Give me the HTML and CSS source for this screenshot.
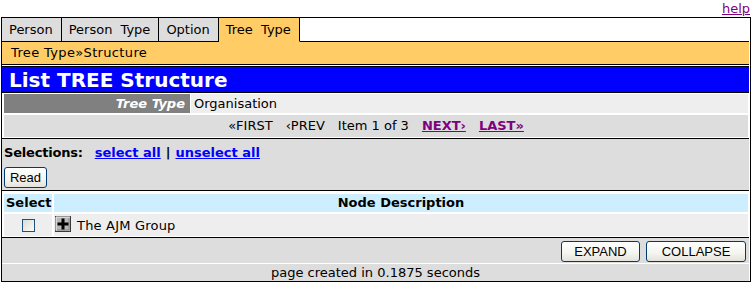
FILE: index.html
```html
<!DOCTYPE html>
<html>
	<head>
		<meta charset="UTF-8">
		<title>List TREE Structure</title>
		<link rel="stylesheet" href="styles.css">
	</head>
	<body>
		<div class="helpBar"><a href="#" class="visited">help</a></div>
		<div class="frame">
			<div class="tabs">
				<div class="tab">Person</div>
				<div class="tab">Person Type</div>
				<div class="tab">Option</div>
				<div class="tab active">Tree Type</div>
				<div class="tabFill"></div>
			</div>
			<div class="crumb">Tree Type»Structure</div>
			<div class="title">List TREE Structure</div>
			<div class="info">
				<div class="infoRow">
					<div class="label">Tree Type</div>
					<div class="value">Organisation</div>
				</div>
				<div class="pager">
					<span>«FIRST</span>
					<span>‹PREV</span>
					<span>Item 1 of 3</span>
					<a href="#" class="visited">NEXT›</a>
					<a href="#" class="visited">LAST»</a>
				</div>
			</div>
			<div class="selections">
				<div class="selLine">
					<b>Selections:</b>
					<a href="#">select all</a>
					<b>|</b>
					<a href="#">unselect all</a>
				</div>
				<div><button class="xpBtn readBtn">Read</button></div>
			</div>
			<div class="list">
				<div class="listRow head">
					<div class="colSelect">Select</div>
					<div class="colDesc">Node Description</div>
				</div>
				<div class="listRow item">
					<div class="colSelect"><input type="checkbox" class="check"></div>
					<div class="colDesc">
						<svg class="plus" width="16" height="16" viewBox="0 0 16 16">
							<rect x="0.5" y="0.5" width="15" height="15" fill="#b8b8b8" stroke="#3a3a3a"/>
							<path d="M1 14.5V1h14" stroke="#f4f4f4" fill="none"/>
							<path d="M2 14h12V2" stroke="#8a8a8a" fill="none"/>
							<path d="M6.5 2.5h3v4h4v3h-4v4h-3v-4h-4v-3h4z" fill="#000"/>
						</svg>
						<span>The AJM Group</span>
					</div>
				</div>
			</div>
			<div class="actions">
				<button class="xpBtn expandBtn">EXPAND</button>
				<button class="xpBtn collapseBtn">COLLAPSE</button>
			</div>
			<div class="footer">page created in 0.1875 seconds</div>
		</div>
	</body>
</html>
```

FILE: styles.css
```css
*,
*::before,
*::after{
	box-sizing: border-box;
}
body{
	margin: 0;
	background: #fff;
	font-family: "DejaVu Sans", Verdana, sans-serif;
	font-size: 13px;
	color: #000;
}
a{
	color: #00f;
	font-weight: bold;
}
a.visited{
	color: #800080;
}
.helpBar{
	height: 17px;
	line-height: 17px;
	text-align: right;
	padding-right: 2px;
}
.helpBar a{
	font-weight: normal;
}
.frame{
	width: 750px;
	margin-left: 1px;
	border: 1px solid #000;
	padding-right: 1px;
}
.tabs{
	display: flex;
	height: 24px;
}
.tabs .tab{
	height: 24px;
	line-height: 24px;
	padding: 0 8px 0 7px;
	word-spacing: 4px;
	background: #ddd;
	border-right: 1px solid #000;
	border-bottom: 1px solid #000;
}
.tabs .tab.active{
	background: #fc6;
	border-bottom-color: #fc6;
}
.tabs .tabFill{
	flex: 1;
	border-bottom: 1px solid #000;
}
.crumb{
	height: 23px;
	line-height: 22px;
	padding-left: 9px;
	letter-spacing: 0.35px;
	background: #fc6;
	border-bottom: 1px solid #000;
}
.title{
	margin-top: 1px;
	height: 27px;
	line-height: 26px;
	padding-left: 7px;
	background: #00f;
	color: #fff;
	font-size: 20px;
	font-weight: bold;
	border-top: 1px solid #000;
	border-bottom: 1px solid #000;
}
.info{
	display: flex;
	flex-direction: column;
	gap: 2px;
	padding: 1px 1px 1px 2px;
	background: #fff;
}
.infoRow{
	display: grid;
	grid-template-columns: 186px 1fr;
	gap: 1px;
	height: 19px;
	line-height: 19px;
}
.infoRow .label{
	background: #808080;
	color: #fff;
	font-weight: bold;
	font-style: italic;
	text-align: right;
	padding-right: 5px;
}
.infoRow .value{
	background: #eee;
	padding-left: 3px;
}
.pager{
	display: flex;
	justify-content: center;
	gap: 13px;
	height: 22px;
	line-height: 22px;
	background: #ddd;
}
.selections{
	height: 52px;
	padding: 5px 2px 0;
	background: #ddd;
	border-top: 1px solid #000;
}
.selLine{
	height: 17px;
	line-height: 17px;
	display: flex;
	gap: 5px;
}
.selLine b:first-child{
	margin-right: 7px;
	letter-spacing: -0.2px;
}
.xpBtn{
	font-family: "Liberation Sans", Arial, sans-serif;
	font-size: 13px;
	height: 21px;
	padding: 0;
	border: 1px solid #003c74;
	border-radius: 3px;
	background: linear-gradient(#fff, #f4f4f0 60%, #e3e2da);
	color: #000;
}
.readBtn{
	width: 43px;
	margin-top: 6px;
}
.list{
	display: flex;
	flex-direction: column;
	gap: 2px;
	padding: 3px 1px 1px 2px;
	background: #fff;
	border-top: 1px solid #000;
}
.listRow{
	display: grid;
	grid-template-columns: 48px 1fr;
	gap: 2px;
}
.listRow.head{
	height: 18px;
	line-height: 18px;
	font-weight: bold;
}
.listRow.head > div{
	background: #cef;
}
.listRow.head .colSelect{
	padding-left: 2px;
}
.listRow.head .colDesc{
	text-align: center;
}
.listRow.item{
	height: 22px;
}
.listRow.item > div{
	background: #eee;
	display: flex;
	align-items: center;
}
.listRow.item .colSelect{
	justify-content: center;
	padding-top: 1px;
}
.listRow.item .colDesc{
	padding-left: 1px;
	gap: 6px;
	letter-spacing: 0.2px;
}
.check{
	appearance: none;
	margin: 0;
	width: 13px;
	height: 13px;
	border: 1px solid #1c5180;
	background: linear-gradient(135deg, #dcdcd5, #fbfbf9);
}
.plus{
	display: block;
	margin-top: -3px;
}
.actions{
	display: flex;
	justify-content: flex-end;
	gap: 6px;
	height: 26px;
	padding: 3px 3px 0 0;
	background: #ddd;
	border-top: 1px solid #000;
}
.expandBtn{
	width: 79px;
}
.collapseBtn{
	width: 100px;
}
.footer{
	height: 18px;
	line-height: 17px;
	text-align: center;
	background: #ddd;
	border-top: 1px solid #fff;
}
```
